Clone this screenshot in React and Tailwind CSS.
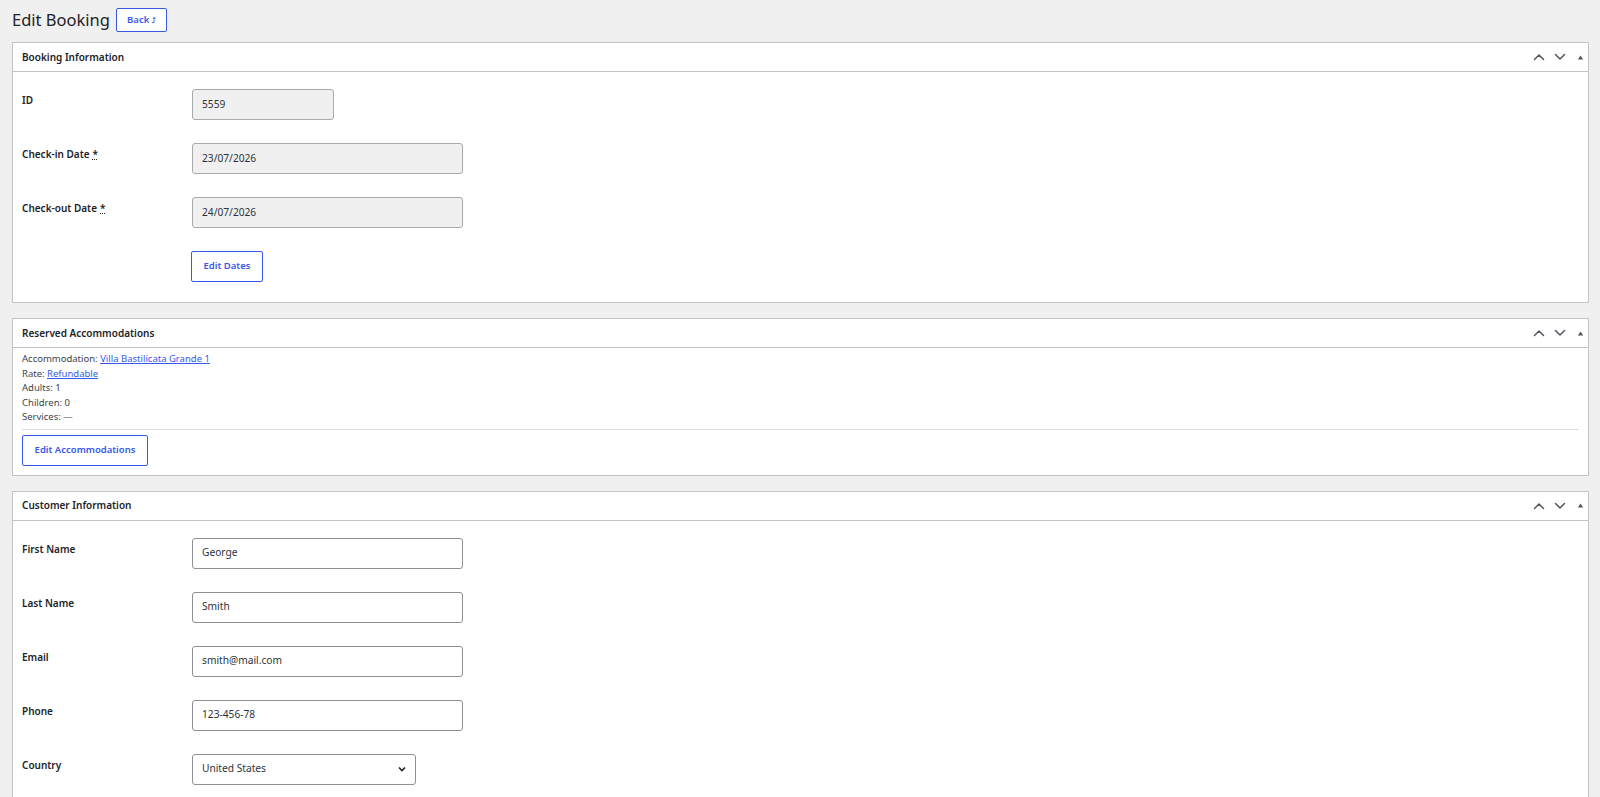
import React from "react";

const font = { fontFamily: '"Noto Sans", "Open Sans", sans-serif' };

function HeaderIcons() {
  return (
    <div className="flex items-center text-[#50575e]">
      <svg width="12" height="8" viewBox="0 0 12 8" fill="none" stroke="currentColor" strokeWidth="1.5" strokeLinecap="round" strokeLinejoin="round">
        <path d="M1.5 6.5 L6 2 L10.5 6.5" />
      </svg>
      <svg className="ml-[9px]" width="12" height="8" viewBox="0 0 12 8" fill="none" stroke="currentColor" strokeWidth="1.5" strokeLinecap="round" strokeLinejoin="round">
        <path d="M1.5 1.5 L6 6 L10.5 1.5" />
      </svg>
      <svg className="ml-[11px]" width="7" height="7" viewBox="0 0 7 7" fill="currentColor">
        <path d="M0.8 5.5 L3.5 1.5 L6.2 5.5 Z" />
      </svg>
    </div>
  );
}

function Panel({ title, children }) {
  return (
    <div className="bg-white border border-[#c3c4c7]">
      <div className="h-[29px] border-b border-[#c3c4c7] flex items-center justify-between pl-[9px] pr-[4px]">
        <h2 className="text-[10px] font-semibold text-[#1d2327]">{title}</h2>
        <HeaderIcons />
      </div>
      {children}
    </div>
  );
}

function Row({ label, required, children }) {
  return (
    <div className="flex items-start h-[54px]">
      <div className="w-[170px] pt-[1px] text-[10px] font-semibold text-[#1d2327] leading-[20px]">
        {label}
        {required && <span className="ml-[3px] underline decoration-dotted">*</span>}
      </div>
      {children}
    </div>
  );
}

function Input({ value, width = "w-[271px]", disabled }) {
  return (
    <div
      className={`${width} h-[31px] rounded-[3px] border flex items-center pl-[9px] text-[10.2px] text-[#2c3338] ${
        disabled ? "bg-[#f0f0f1] border-[#a7aaad]" : "bg-white border-[#8c8f94]"
      }`}
    >
      {value}
    </div>
  );
}

function OutlineButton({ children, className = "" }) {
  return (
    <button
      className={`h-[31px] border border-[#3858e9] rounded-[2px] bg-white text-[#3858e9] text-[9.5px] font-semibold ${className}`}
    >
      {children}
    </button>
  );
}

export default function App() {
  return (
    <div className="min-h-[797px] bg-[#f0f0f1] pl-[12px] pr-[11px]" style={font}>
      <div className="flex items-center h-[42px] pb-[2px]">
        <h1 className="text-[16.5px] text-[#1d2327] leading-none">Edit Booking</h1>
        <button className="ml-[6px] h-[24px] w-[51px] border border-[#3858e9] rounded-[2px] bg-white text-[#3858e9] text-[9.5px] font-semibold">
          Back <span className="text-[7px]">⤴</span>
        </button>
      </div>

      <div className="flex flex-col gap-[15px]">
        <Panel title="Booking Information">
          <div className="pl-[9px] pt-[17px] pb-[20px]">
            <Row label="ID">
              <Input value="5559" width="w-[142px]" disabled />
            </Row>
            <Row label="Check-in Date" required>
              <Input value="23/07/2026" disabled />
            </Row>
            <Row label="Check-out Date" required>
              <Input value="24/07/2026" disabled />
            </Row>
            <div className="flex">
              <div className="w-[169px]" />
              <OutlineButton className="w-[72px]">Edit Dates</OutlineButton>
            </div>
          </div>
        </Panel>

        <Panel title="Reserved Accommodations">
          <div className="px-[9px] pt-[4px] pb-[9px] text-[9.5px] leading-[14.5px] text-[#3c434a]">
            <div>
              Accommodation: <a className="text-[#3858e9] underline" href="#">Villa Bastilicata Grande 1</a>
            </div>
            <div>
              Rate: <a className="text-[#3858e9] underline" href="#">Refundable</a>
            </div>
            <div>Adults: 1</div>
            <div>Children: 0</div>
            <div>Services: —</div>
            <div className="border-t border-[#dcdcde] mt-[4px] mb-[5px]" />
            <OutlineButton className="w-[126px]">Edit Accommodations</OutlineButton>
          </div>
        </Panel>

        <Panel title="Customer Information">
          <div className="pl-[9px] pt-[17px] pb-[20px]">
            <Row label="First Name">
              <Input value="George" />
            </Row>
            <Row label="Last Name">
              <Input value="Smith" />
            </Row>
            <Row label="Email">
              <Input value="smith@mail.com" />
            </Row>
            <Row label="Phone">
              <Input value="123-456-78" />
            </Row>
            <Row label="Country">
              <div className="w-[224px] h-[31px] rounded-[3px] border border-[#8c8f94] bg-white flex items-center justify-between pl-[9px] pr-[7px] text-[10.2px] text-[#2c3338]">
                <span>United States</span>
                <svg width="12" height="12" viewBox="0 0 12 12" fill="none" stroke="#1d2327" strokeWidth="1.6">
                  <path d="M3 4.5 L6 7.5 L9 4.5" />
                </svg>
              </div>
            </Row>
          </div>
        </Panel>
      </div>
    </div>
  );
}
